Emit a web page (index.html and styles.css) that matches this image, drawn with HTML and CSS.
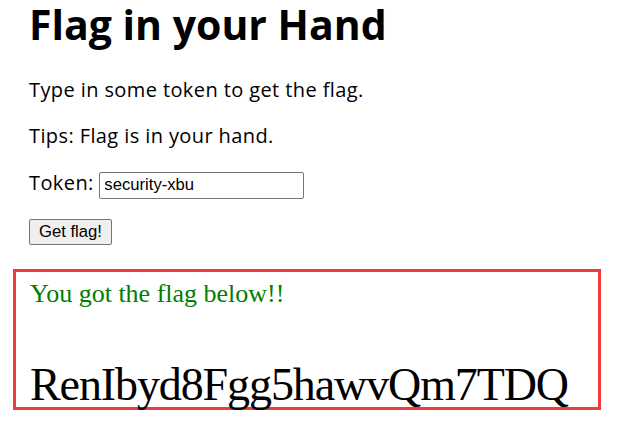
FILE: index.html
```html
<!DOCTYPE html>
<html>
<head>
<meta charset="utf-8">
<title>Flag in your Hand</title>
<link rel="stylesheet" href="styles.css">
</head>
<body>
<div class="page">
  <div class="content">
    <h1 class="title">Flag in your Hand</h1>
    <p class="text intro">Type in some token to get the flag.</p>
    <p class="text tips">Tips: Flag is in your hand.</p>
    <p class="text token-row"><label for="token">Token:</label> <input id="token" class="token-input" type="text" value="security-xbu"></p>
    <div class="actions"><button class="btn" type="button">Get flag!</button></div>
  </div>
  <div class="result">
    <p class="result-msg">You got the flag below!!</p>
    <p class="result-flag">RenIbyd8Fgg5hawvQm7TDQ</p>
  </div>
</div>
</body>
</html>
```
FILE: styles.css
```css
html, body {
  margin: 0;
  padding: 0;
  background: #ffffff;
}
body {
  font-family: "Open Sans", "Noto Sans CJK SC", sans-serif;
  color: #000;
}
.page {
  padding: 0 16px 0 13px;
}
.content {
  padding-left: 16px;
}
.title {
  margin: 0;
  font-size: 41px;
  line-height: 48px;
  font-weight: 700;
}
.text {
  margin: 0;
  font-size: 20px;
  line-height: 24px;
  letter-spacing: 0.4px;
}
.intro {
  margin-top: 30px;
}
.tips {
  margin-top: 22px;
}
.token-row {
  margin-top: 20px;
  line-height: 30px;
}
.token-input {
  font-family: "Liberation Sans", Arial, sans-serif;
  font-size: 16.67px;
  letter-spacing: 0;
  width: 205px;
  height: 27px;
  box-sizing: border-box;
  padding: 1px 4px;
  border: 1px solid #767676;
  border-radius: 2px;
  margin: 0;
  vertical-align: baseline;
}
.actions {
  margin-top: 20px;
}
.btn {
  font-family: "Liberation Sans", Arial, sans-serif;
  font-size: 16.67px;
  height: 26px;
  padding: 0 9px;
  box-sizing: border-box;
  background: #efefef;
  border: 1px solid #767676;
  border-radius: 2px;
  color: #000;
  margin: 0;
}
.result {
  margin-top: 24px;
  border: 3px solid #ef3b3b;
  padding: 0 14px;
  height: 135px;
  font-family: "Liberation Serif", "Times New Roman", serif;
}
.result-msg {
  margin: 0;
  padding-top: 4px;
  color: #008000;
  font-size: 26px;
  line-height: 36px;
}
.result-flag {
  margin: 0;
  margin-top: 50px;
  font-size: 46px;
  line-height: 46px;
  letter-spacing: -1.1px;
}
```
